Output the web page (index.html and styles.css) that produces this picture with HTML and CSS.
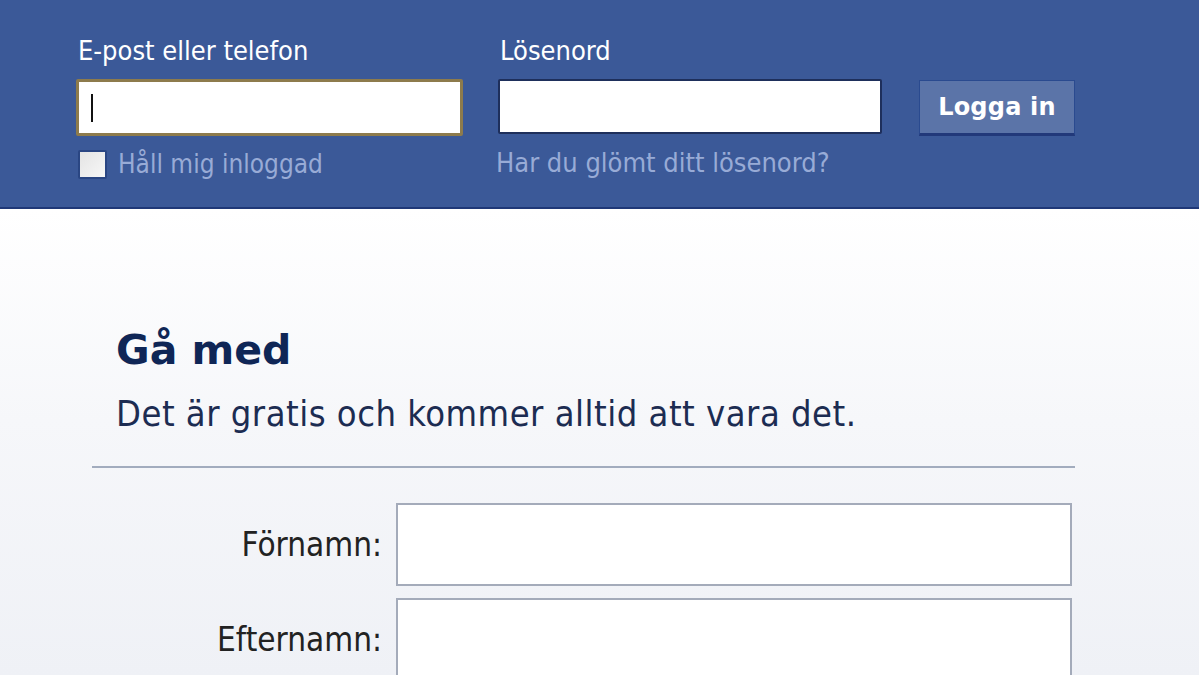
FILE: index.html
```html
<!DOCTYPE html>
<html lang="sv">
<head>
<meta charset="utf-8">
<title>Logga in</title>
<link rel="stylesheet" href="styles.css">
</head>
<body>
<header class="topbar">
  <div class="login">
    <div class="col col-email">
      <label class="lbl">E-post eller telefon</label>
      <div class="field focus"><span class="caret"></span></div>
      <div class="sub"><span class="check"></span><span class="muted">Håll mig inloggad</span></div>
    </div>
    <div class="col col-pass">
      <label class="lbl">Lösenord</label>
      <div class="field"></div>
      <div class="sub"><span class="muted">Har du glömt ditt lösenord?</span></div>
    </div>
    <div class="col col-btn">
      <button class="btn">Logga in</button>
    </div>
  </div>
</header>
<main class="main">
  <section class="signup">
    <h1 class="title">Gå med</h1>
    <p class="tagline">Det är gratis och kommer alltid att vara det.</p>
    <hr class="rule">
    <div class="form">
      <div class="row"><span class="rlabel">Förnamn:</span><div class="box"></div></div>
      <div class="row"><span class="rlabel">Efternamn:</span><div class="box"></div></div>
    </div>
  </section>
</main>
</body>
</html>
```
FILE: styles.css
```css
html, body {
  margin: 0;
  padding: 0;
  height: 100%;
  overflow: hidden;
}
body {
  font-family: "DejaVu Sans Condensed", "DejaVu Sans", sans-serif;
  font-stretch: condensed;
  background: linear-gradient(#ffffff 0px, #ffffff 210px, #f6f7fa 420px, #eff1f6 675px);
}
.topbar {
  height: 207px;
  background: #3b5998;
  border-bottom: 2px solid #1f3877;
  box-sizing: content-box;
}
.login {
  display: flex;
  padding: 36px 0 0 76px;
}
.col { display: flex; flex-direction: column; }
.col-email { width: 387px; margin-right: 35px; }
.col-pass { width: 384px; margin-right: 37px; }
.col-btn { padding-top: 44px; }
.lbl {
  color: #ffffff;
  font-size: 27px;
  line-height: 30px;
  height: 30px;
  margin-left: 2px;
}
.field {
  margin-top: 13px;
  height: 51px;
  background: #ffffff;
  border: 2px solid #1e2f5b;
  border-radius: 2px;
  display: flex;
  align-items: center;
  padding-left: 12px;
}
.field.focus {
  border: 3px solid #8d7b4c;
  height: 51px;
}
.caret {
  width: 2px;
  height: 28px;
  background: #111;
}
.sub {
  display: flex;
  align-items: center;
  margin-top: 13px;
  height: 30px;
}
.check {
  width: 25px;
  height: 25px;
  background: linear-gradient(135deg, #e4e4e4, #f7f7f7);
  border: 2px solid #2a4683;
  border-radius: 2px;
  margin: 0 11px 0 2px;
}
.muted {
  color: #98abd6;
  font-size: 26px;
}
.col-pass .muted { margin-left: -2px; font-size: 27px; }
.btn {
  font-family: "DejaVu Sans", sans-serif;
  font-weight: bold;
  font-size: 24px;
  color: #ffffff;
  background: #5b74a8;
  border: 1px solid #2a4a8f;
  border-bottom: 3px solid #22397a;
  width: 156px;
  height: 56px;
  padding: 0;
  letter-spacing: 0.2px;
}
.main {
  padding: 0 0 0 92px;
}
.signup {
  width: 983px;
}
.title {
  margin: 113px 0 0 24px;
  font-family: "DejaVu Sans", sans-serif;
  font-stretch: normal;
  font-weight: bold;
  font-size: 41px;
  line-height: 56px;
  color: #0f2656;
}
.tagline {
  margin: 14px 0 0 24px;
  font-size: 36px;
  letter-spacing: 0.5px;
  line-height: 44px;
  color: #1c2c52;
}
.rule {
  margin: 30px 0 0 0;
  border: 0;
  height: 2px;
  background: #a2acbe;
}
.form {
  display: flex;
  flex-direction: column;
  gap: 12px;
  margin-top: 35px;
}
.row {
  display: flex;
  align-items: center;
}
.rlabel {
  width: 290px;
  text-align: right;
  font-size: 33px;
  color: #222;
  margin-right: 14px;
}
.box {
  width: 672px;
  height: 79px;
  background: #ffffff;
  border: 2px solid #a4abba;
}
```
